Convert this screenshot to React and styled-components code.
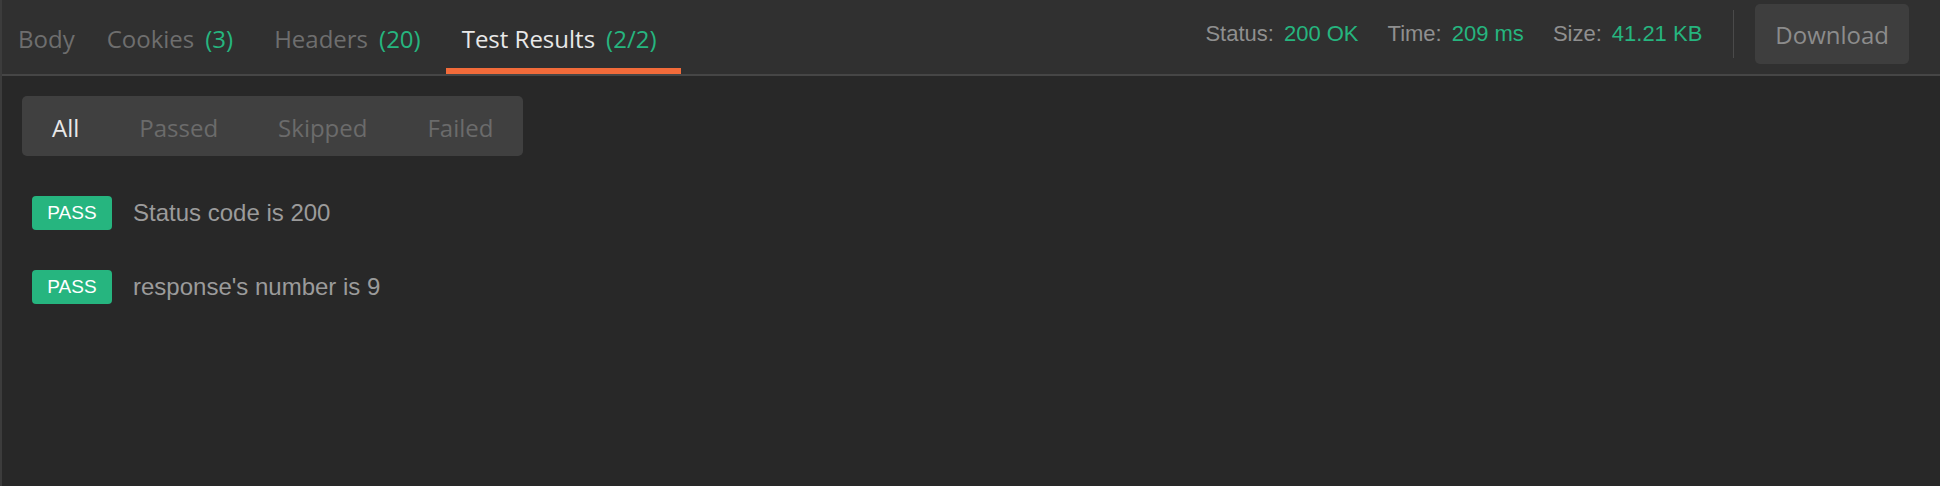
import React from "react";
import styled, { createGlobalStyle } from "styled-components";

const COLORS = {
  PANEL: "#282828",
  HEADER: "#303030",
  BORDER: "#464646",
  EDGE: "#3c3c3c",
  ORANGE: "#f26b3a",
  GREEN: "#26b57f",
  MUTED: "#6e6e6e",
  ACTIVE: "#e8e8e8",
};

const GlobalStyle = createGlobalStyle`
  html, body {
    margin: 0;
    padding: 0;
    background: ${COLORS.PANEL};
  }

  * {
    box-sizing: border-box;
  }
`;

const Panel = styled.div`
  display: flex;
  flex-direction: column;
  height: 486px;
  background: ${COLORS.PANEL};
  border-left: 2px solid ${COLORS.EDGE};
  font-family: "Open Sans", "Noto Sans", sans-serif;
`;

const Header = styled.div`
  display: flex;
  justify-content: space-between;
  height: 76px;
  background: ${COLORS.HEADER};
  border-bottom: 2px solid ${COLORS.BORDER};
  padding-right: 31px;
`;

const Tabs = styled.nav`
  display: flex;
`;

const Tab = styled.div`
  display: flex;
  align-items: center;
  padding: 10px 16px 0;
  border-bottom: 6px solid ${(p) => (p.$active ? COLORS.ORANGE : "transparent")};
  font-size: 24px;
  line-height: 32px;
  color: ${(p) => (p.$active ? COLORS.ACTIVE : COLORS.MUTED)};
  cursor: pointer;
  white-space: nowrap;
`;

const Count = styled.span`
  color: ${COLORS.GREEN};
  margin-left: 11px;
  margin-right: 9px;
`;

const Meta = styled.div`
  display: flex;
  align-items: center;
  height: 68px;
`;

const Stat = styled.div`
  display: flex;
  align-items: center;
  margin-left: 29px;
  font-family: "Liberation Sans", Arial, sans-serif;
  font-size: 22px;
  color: #8f8f8f;
  white-space: nowrap;

  span {
    color: ${COLORS.GREEN};
    margin-left: 10px;
  }
`;

const Divider = styled.div`
  width: 1px;
  height: 48px;
  background: #4a4a4a;
  margin: 0 21px 0 31px;
`;

const DownloadButton = styled.button`
  height: 60px;
  padding: 0 20px;
  border: none;
  border-radius: 5px;
  background: #3e3e3e;
  color: #8c8c8c;
  font-family: "Open Sans", "Noto Sans", sans-serif;
  font-size: 24px;
  cursor: pointer;
`;

const Body = styled.div`
  padding: 20px 20px;
`;

const Filter = styled.div`
  display: inline-flex;
  height: 60px;
  background: #404040;
  border-radius: 5px;
`;

const FilterItem = styled.div`
  display: flex;
  align-items: center;
  padding: 2px 30px 0;
  font-size: 24px;
  color: ${(p) => (p.$active ? COLORS.ACTIVE : "#6b6b6b")};
  cursor: pointer;
`;

const Results = styled.ul`
  list-style: none;
  margin: 40px 0 0 10px;
  padding: 0;
  display: flex;
  flex-direction: column;
  gap: 40px;
`;

const ResultRow = styled.li`
  display: flex;
  align-items: center;
  gap: 21px;
  height: 34px;
  font-family: "Liberation Sans", Arial, sans-serif;
`;

const Badge = styled.span`
  display: flex;
  align-items: center;
  justify-content: center;
  width: 80px;
  height: 34px;
  border-radius: 4px;
  background: ${COLORS.GREEN};
  color: #ffffff;
  font-size: 19px;
`;

const TestName = styled.span`
  font-size: 24px;
  color: #9b9b9b;
`;

const tabs = [
  { label: "Body" },
  { label: "Cookies", count: "(3)" },
  { label: "Headers", count: "(20)" },
  { label: "Test Results", count: "(2/2)", active: true },
];

const filters = ["All", "Passed", "Skipped", "Failed"];

const tests = [
  { status: "PASS", name: "Status code is 200" },
  { status: "PASS", name: "response's number is 9" },
];

const App = () => {
  const [filter, setFilter] = React.useState("All");

  return (
    <>
      <GlobalStyle />
      <Panel>
        <Header>
          <Tabs>
            {tabs.map((t) => (
              <Tab key={t.label} $active={t.active}>
                {t.label}
                {t.count && <Count>{t.count}</Count>}
              </Tab>
            ))}
          </Tabs>
          <Meta>
            <Stat>
              Status:<span>200 OK</span>
            </Stat>
            <Stat>
              Time:<span>209 ms</span>
            </Stat>
            <Stat>
              Size:<span>41.21 KB</span>
            </Stat>
            <Divider />
            <DownloadButton>Download</DownloadButton>
          </Meta>
        </Header>
        <Body>
          <Filter>
            {filters.map((f) => (
              <FilterItem
                key={f}
                $active={filter === f}
                onClick={() => setFilter(f)}
              >
                {f}
              </FilterItem>
            ))}
          </Filter>
          <Results>
            {tests.map((t) => (
              <ResultRow key={t.name}>
                <Badge>{t.status}</Badge>
                <TestName>{t.name}</TestName>
              </ResultRow>
            ))}
          </Results>
        </Body>
      </Panel>
    </>
  );
};

export default App;
